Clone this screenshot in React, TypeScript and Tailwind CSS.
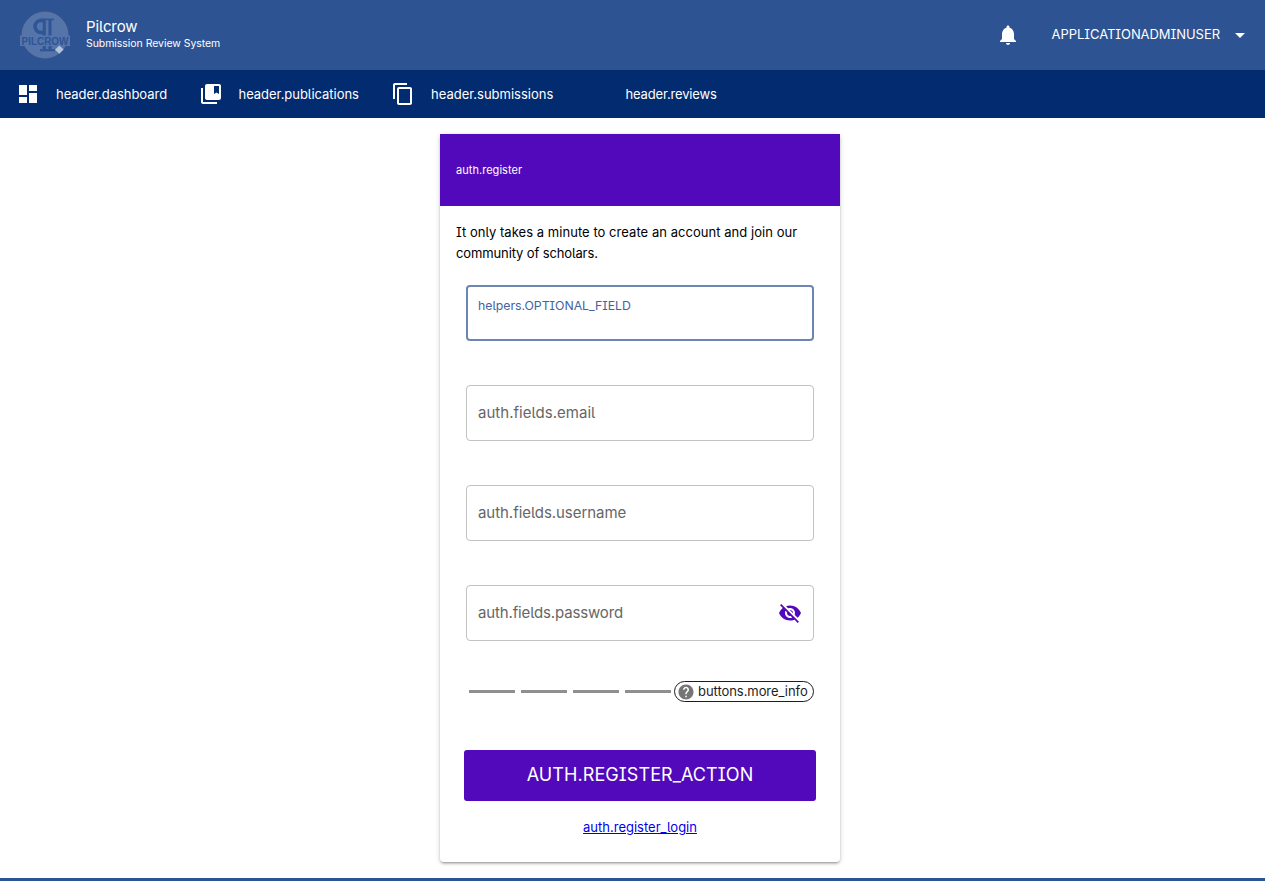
import { MdArrowDropDown, MdCollectionsBookmark, MdContentCopy, MdDashboard, MdHelp, MdNotifications, MdVisibilityOff } from "react-icons/md";

const navItems = [
  { label: "header.dashboard", icon: MdDashboard, width: "w-[182.5px]", tracking: "tracking-[-0.04px]" },
  { label: "header.publications", icon: MdCollectionsBookmark, width: "w-[192.5px]", tracking: "tracking-[-0.03px]" },
  { label: "header.submissions", icon: MdContentCopy, width: "w-[194.5px]", tracking: "tracking-normal" },
  { label: "header.reviews", icon: null, width: "w-[163px]", tracking: "tracking-[-0.15px]" },
];

function Logo() {
  return (
    <svg width="50" height="50" viewBox="0 0 50 50" className="shrink-0 overflow-visible">
      <circle cx="25" cy="25" r="23" fill="#5474aa" stroke="#64779b" strokeWidth="0.8" />
      <g fill="none" stroke="#2f5596">
        <path d="M25 10.500h-4a6 6 0 0 0 0 12H25" strokeWidth="3.600" />
        <path d="M20 9.400h14" strokeWidth="1.600" />
        <path d="M24.300 9v30M30 9v30" strokeWidth="3" />
        <path d="M20 40.200h15" strokeWidth="2.200" />
      </g>
      <rect x="0" y="25.500" width="50" height="10.500" fill="#5474aa" />
      <text x="1.500" y="35" textLength="47" lengthAdjust="spacingAndGlyphs" fontFamily="Liberation Sans" fontWeight="700" fontSize="11" fill="#2f5596">PILCROW</text>
      <path d="M39.300 35.500l4.300 4-4.300 4.300-4.300-4z" fill="#b4c3dd" />
    </svg>
  );
}

function Field({ label, tracking, password = false }: { label: string; tracking: string; password?: boolean }) {
  return (
    <div className="flex h-14 items-center justify-between rounded border border-[#c2c2c2] px-[11px] text-[15px] text-[#666]">
      <span className={tracking}>{label}</span>
      {password && <MdVisibilityOff className="size-6 text-[#5109bb]" />}
    </div>
  );
}

export default function App() {
  return (
    <div className="h-[881px] overflow-hidden bg-white font-['Inter',sans-serif] text-[13px] text-black [font-feature-settings:'cv05','cv08']">
      <header className="flex h-[70px] items-center bg-[#2d5393] pl-5 text-white">
        <Logo />
        <div className="ml-4 flex-1 pb-px">
          <div className="text-[15px] leading-[18px] tracking-[-0.08px]">Pilcrow</div>
          <div className="text-[10.5px] leading-[15px] tracking-[-0.05px]">Submission Review System</div>
        </div>
        <MdNotifications className="mr-8 size-6" />
        <span className="tracking-[-0.05px]">APPLICATIONADMINUSER</span>
        <MdArrowDropDown className="mr-[13px] ml-2 size-6" />
      </header>
      <nav className="flex h-12 items-center bg-[#032b70] pl-4 text-white">
        {navItems.map(({ label, icon: Icon, width, tracking }) => (
          <a key={label} className={"flex items-center " + width}>
            <span className="mr-4 size-6">{Icon && <Icon className="size-6" />}</span>
            <span className={"pt-px " + tracking}>{label}</span>
          </a>
        ))}
      </nav>
      <main className="flex h-[760px] pt-4 pl-[440px]">
        <section className="h-[728px] w-[400px] rounded bg-white shadow-[0_1px_5px_rgba(0,0,0,0.2),0_2px_2px_rgba(0,0,0,0.14),0_3px_1px_-2px_rgba(0,0,0,0.12)]">
          <div className="flex h-[72px] items-center bg-[#5109bb] px-4 text-[11px] tracking-[0.04px] text-white">auth.register</div>
          <p className="px-4 pt-4 leading-[21px]">
            <span className="tracking-[0.045px]">It only takes a minute to create an account and join our</span>
            <br />
            <span className="tracking-[-0.12px]">community of scholars.</span>
          </p>
          <div className="mx-[26px] mt-[21px] grid gap-11">
            <div className="h-14 rounded border-2 border-[#6c86b3] px-[10px] pt-[9px] text-[12.3px] leading-5 tracking-[-0.02px] text-[#3f64a4]">helpers.OPTIONAL_FIELD</div>
            <Field label="auth.fields.email" tracking="tracking-[0.03px]" />
            <Field label="auth.fields.username" tracking="tracking-[-0.05px]" />
            <Field label="auth.fields.password" tracking="tracking-[-0.14px]" password />
          </div>
          <div className="mx-[26px] mt-10 flex items-center">
            <div className="flex gap-1.5 pl-[3px]">
              {[0, 1, 2, 3].map((n) => (
                <span key={n} className="h-[3px] w-[46px] bg-[#8f8f8f]" />
              ))}
            </div>
            <button className="ml-[3px] flex h-[21px] w-[140px] items-center rounded-full border border-[#1d1d1d] pl-0.5 text-[13px] tracking-[-0.06px] text-[#1d1d1d]">
              <MdHelp className="mr-[3px] size-[18px] shrink-0 text-[#757575]" />
              buttons.more_info
            </button>
          </div>
          <button className="mx-6 mt-12 flex h-[51px] w-[352px] items-center justify-center rounded-[3px] bg-[#5109bb] pb-0.5 text-[18px] tracking-[0.08px] text-white">AUTH.REGISTER_ACTION</button>
          <p className="mt-4 text-center leading-[21px] text-[#00e] underline">auth.register_login</p>
        </section>
      </main>
      <footer className="h-[3px] bg-[#2d5393]" />
    </div>
  );
}
